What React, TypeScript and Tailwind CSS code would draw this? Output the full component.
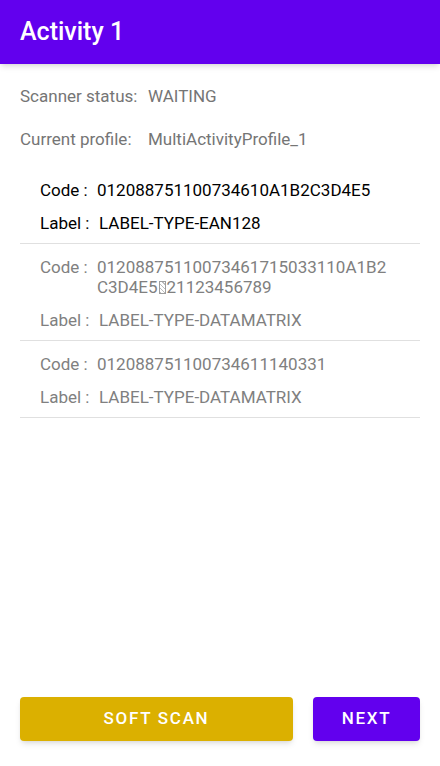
import React from 'react';

type Scan = { code: React.ReactNode; label: string; active?: boolean };

const GS = () => (
  <span className="inline-block w-[7px] h-[13px] mx-[1px] align-[-1px] border border-[#9e9e9e] bg-[repeating-linear-gradient(45deg,#bdbdbd_0px,#bdbdbd_1px,transparent_1px,transparent_3px)]" />
);

const scans: Scan[] = [
  { code: '012088751100734610A1B2C3D4E5', label: 'LABEL-TYPE-EAN128', active: true },
  {
    code: (
      <>
        01208875110073461715033110A1B2C3D4E5<GS />21123456789
      </>
    ),
    label: 'LABEL-TYPE-DATAMATRIX',
  },
  { code: '012088751100734611140331', label: 'LABEL-TYPE-DATAMATRIX' },
];

const ScanRow: React.FC<{ scan: Scan }> = ({ scan }) => {
  const tone = scan.active ? 'text-[#000000]' : 'text-[#808080]';
  return (
    <div className={`border-b-[1.5px] border-[#e0e0e0] pl-5 pt-[10px] pb-[7px] ${tone}`}>
      <div className="flex leading-[20px] py-[3px]">
        <span className="w-[57px] shrink-0">Code :</span>
        <span className="w-[300px] break-all">{scan.code}</span>
      </div>
      <div className="flex leading-[20px] pt-[10px] pb-[3px]">
        <span className="w-[59px] shrink-0">Label :</span>
        <span>{scan.label}</span>
      </div>
    </div>
  );
};

export default function App() {
  return (
    <div className="w-[440px] h-[766px] flex flex-col bg-white font-['Roboto',sans-serif] text-[17px]">
      <header className="h-16 shrink-0 bg-[#6200ee] flex items-center px-5 shadow-md">
        <h1 className="text-white text-[25px] font-medium">Activity 1</h1>
      </header>

      <main className="flex-1 px-5 pt-[22px] text-[#757575]">
        <div className="flex leading-[20px]">
          <span className="w-[128px]">Scanner status:</span>
          <span>WAITING</span>
        </div>
        <div className="flex leading-[20px] mt-[23px]">
          <span className="w-[128px]">Current profile:</span>
          <span>MultiActivityProfile_1</span>
        </div>

        <div className="mt-[18px]">
          {scans.map((s, i) => (
            <ScanRow key={i} scan={s} />
          ))}
        </div>
      </main>

      <footer className="flex gap-5 px-5 pb-[25px]">
        <button className="flex-1 h-11 rounded bg-[#dbb000] text-white font-medium text-[17px] tracking-[0.1em] shadow-md">
          SOFT SCAN
        </button>
        <button className="w-[107px] h-11 rounded bg-[#6200ee] text-white font-medium text-[17px] tracking-[0.1em] shadow-md">
          NEXT
        </button>
      </footer>
    </div>
  );
}
